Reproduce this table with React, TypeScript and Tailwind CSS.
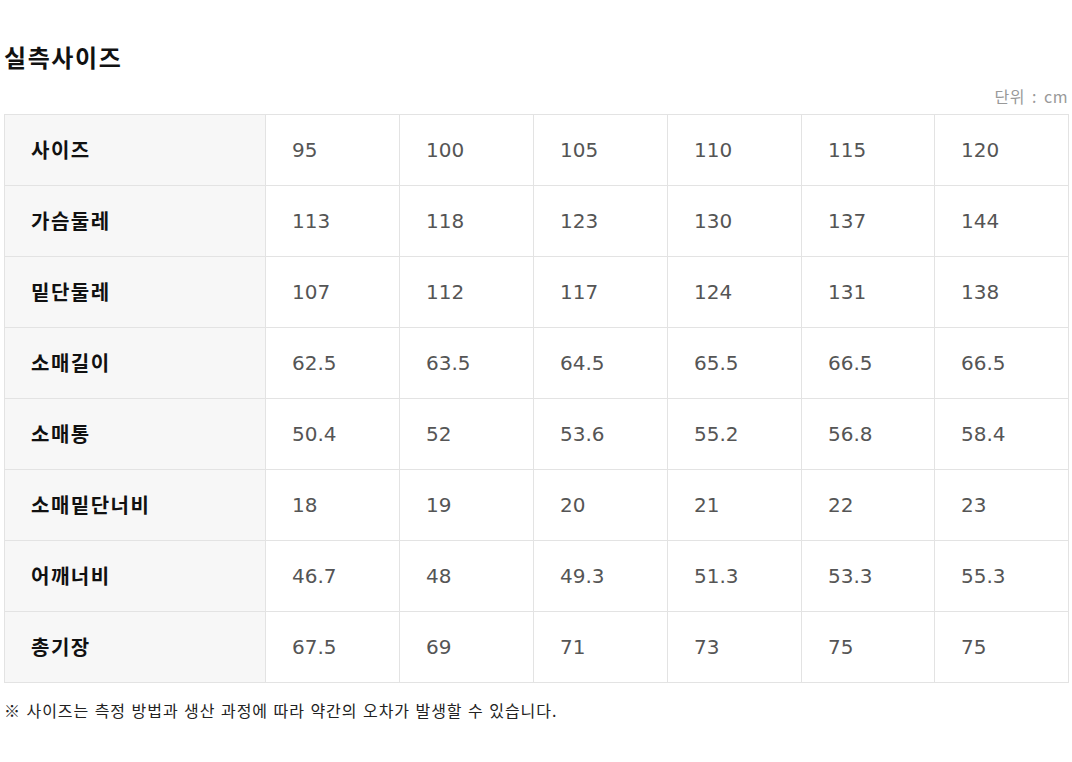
const sizes = ["95", "100", "105", "110", "115", "120"];

const rows: { label: string; values: string[] }[] = [
  { label: "가슴둘레", values: ["113", "118", "123", "130", "137", "144"] },
  { label: "밑단둘레", values: ["107", "112", "117", "124", "131", "138"] },
  { label: "소매길이", values: ["62.5", "63.5", "64.5", "65.5", "66.5", "66.5"] },
  { label: "소매통", values: ["50.4", "52", "53.6", "55.2", "56.8", "58.4"] },
  { label: "소매밑단너비", values: ["18", "19", "20", "21", "22", "23"] },
  { label: "어깨너비", values: ["46.7", "48", "49.3", "51.3", "53.3", "55.3"] },
  { label: "총기장", values: ["67.5", "69", "71", "73", "75", "75"] },
];

const kr = "font-['Noto_Sans_CJK_KR',_'Noto_Sans',_sans-serif]";
const num = "font-['DejaVu_Sans',_'Noto_Sans_CJK_KR',_sans-serif]";

function Row({ label, values }: { label: string; values: string[] }) {
  return (
    <tr className="h-[71px]">
      <th className={`w-[261px] border border-[#e3e3e3] bg-[#f7f7f7] pl-[26px] text-left text-[20px] font-bold tracking-[1.5px] text-[#111] ${kr}`}>
        {label}
      </th>
      {values.map((v, i) => (
        <td key={i} className={`border border-[#e3e3e3] pl-[26px] text-left text-[20px] text-[#555] ${num}`}>
          {v}
        </td>
      ))}
    </tr>
  );
}

export default function App() {
  return (
    <div className={`min-h-[762px] w-[1072px] bg-white px-1 pt-[40px] ${kr}`}>
      <h2 className="text-[24px] font-bold leading-[34px] tracking-[1.6px] text-[#111]">실측사이즈</h2>
      <p className="mt-[10px] text-right text-[16px] leading-[24px] tracking-[0.5px] text-[#999] [word-spacing:3px]">
        단위 : cm
      </p>
      <table className="mt-[6px] w-[1065px] table-fixed border-collapse">
        <colgroup>
          <col className="w-[261px]" />
          <col className="w-[134px]" />
          <col className="w-[134px]" />
          <col className="w-[134px]" />
          <col className="w-[134px]" />
          <col className="w-[133px]" />
          <col className="w-[134px]" />
        </colgroup>
        <tbody>
          <Row label="사이즈" values={sizes} />
          {rows.map((r) => (
            <Row key={r.label} label={r.label} values={r.values} />
          ))}
        </tbody>
      </table>
      <p className="mt-[15px] text-[16px] leading-[24px] tracking-[0.95px] text-[#222] [word-spacing:1px]">
        <span className="font-bold">※</span> 사이즈는 측정 방법과 생산 과정에 따라 약간의 오차가 발생할 수 있습니다.
      </p>
    </div>
  );
}
